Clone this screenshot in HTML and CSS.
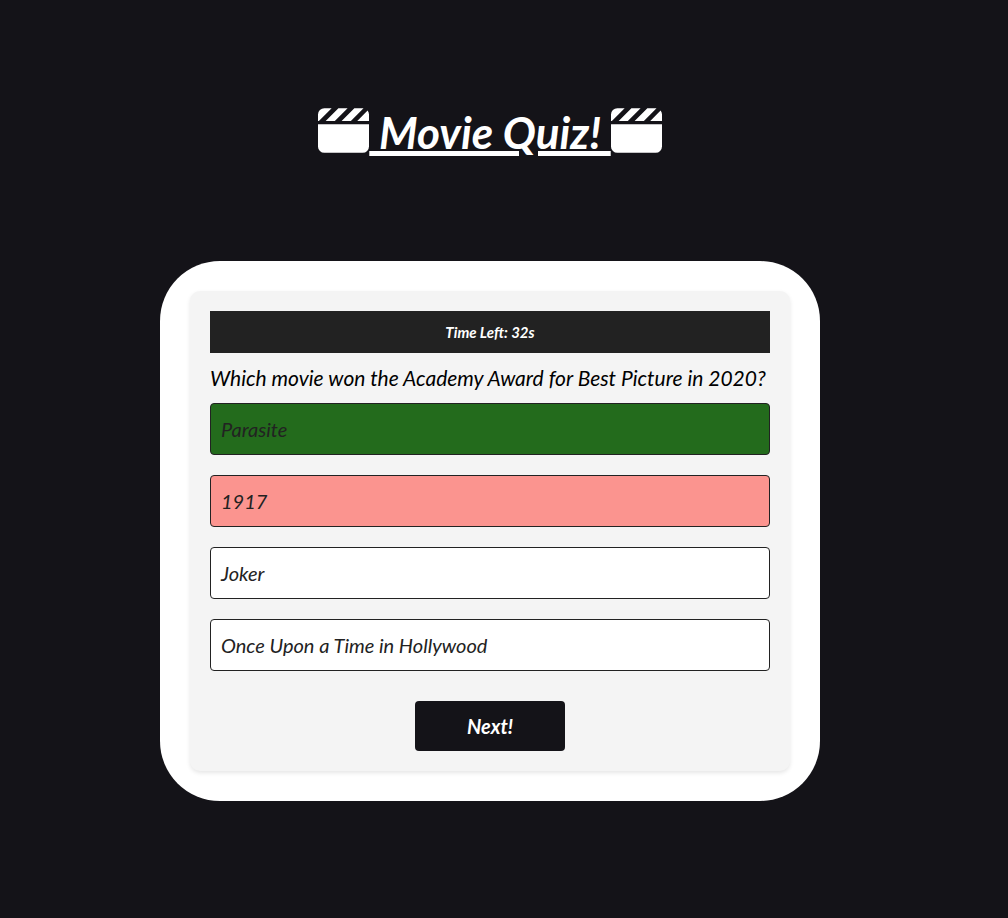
FILE: index.html
```html
<!DOCTYPE html>
<html lang="en">
<head>
<meta charset="utf-8">
<meta name="viewport" content="width=device-width, initial-scale=1">
<title>Movie Quiz!</title>
<link rel="stylesheet" href="styles.css">
</head>
<body class="page">
<svg class="defs" aria-hidden="true">
  <symbol id="clapper" viewBox="0 0 512 448">
    <path d="M0 160H512V384a64 64 0 0 1-64 64H64a64 64 0 0 1-64-64Z"/>
    <path d="M64 0H137L9 128H0V64A64 64 0 0 1 64 0ZM205 0H297L169 128H77ZM365 0H448L457 1 330 128H237ZM498 24Q512 42 512 64V128H394Z"/>
  </symbol>
</svg>
<main class="app">
  <h1 class="title">
    <svg class="title-icon" aria-hidden="true"><use href="#clapper"/></svg>
    <span class="title-text">&nbsp;Movie Quiz!&nbsp;</span>
    <svg class="title-icon" aria-hidden="true"><use href="#clapper"/></svg>
  </h1>
  <section class="frame">
    <div class="card">
      <div class="timer" role="timer">Time Left: 32s</div>
      <h2 class="question">Which movie won the Academy Award for Best Picture in 2020?</h2>
      <div class="answers">
        <button class="answer correct" type="button">Parasite</button>
        <button class="answer wrong" type="button">1917</button>
        <button class="answer" type="button">Joker</button>
        <button class="answer" type="button">Once Upon a Time in Hollywood</button>
      </div>
      <button class="next" type="button">Next!</button>
    </div>
  </section>
</main>
</body>
</html>
```
FILE: styles.css
```css
* {
  box-sizing: border-box;
}

.page {
  margin: 0;
  min-height: 100vh;
  background: #141318;
  color: #000;
  font-family: Lato, sans-serif;
  font-style: italic;
}

.defs {
  position: absolute;
  width: 0;
  height: 0;
}

.app {
  display: flex;
  flex-direction: column;
  align-items: center;
  gap: 96px;
  padding: 96px 28px 96px 0;
}

.title {
  display: flex;
  align-items: center;
  justify-content: center;
  margin: 0;
  color: #fff;
  font-size: 44px;
  line-height: 65px;
}

.title-icon {
  width: 51px;
  height: 45px;
  fill: currentColor;
}

.title-text {
  padding-top: 4px;
  text-decoration: underline;
  text-decoration-thickness: 5px;
  text-underline-offset: 2px;
}

.frame {
  width: 100%;
  max-width: 660px;
  padding: 30px;
  border-radius: 60px;
  background: #fff;
}

.card {
  display: flex;
  flex-direction: column;
  padding: 20px;
  border-radius: 10px;
  background: #f4f4f4;
  box-shadow: 0 2px 4px rgba(0, 0, 0, 0.1);
}

.timer {
  padding: 10px;
  background: #222;
  color: #fff;
  font-size: 15px;
  font-weight: 700;
  line-height: 22px;
  text-align: center;
}

.question {
  margin: 10px 0;
  font-size: 21px;
  font-weight: 400;
  line-height: 30px;
}

.answers {
  display: flex;
  flex-direction: column;
  gap: 20px;
}

.answer {
  padding: 10px;
  border: 1px solid #222;
  border-radius: 4px;
  background: #fff;
  color: #222;
  font: inherit;
  font-size: 20px;
  line-height: 30px;
  text-align: left;
}

.correct {
  background: #236b1c;
}

.wrong {
  background: #fb948f;
}

.next {
  align-self: center;
  width: 150px;
  margin-top: 30px;
  padding: 10px;
  border: 0;
  border-radius: 4px;
  background: #141318;
  color: #fff;
  font: inherit;
  font-size: 20px;
  font-weight: 700;
  line-height: 30px;
}
```
